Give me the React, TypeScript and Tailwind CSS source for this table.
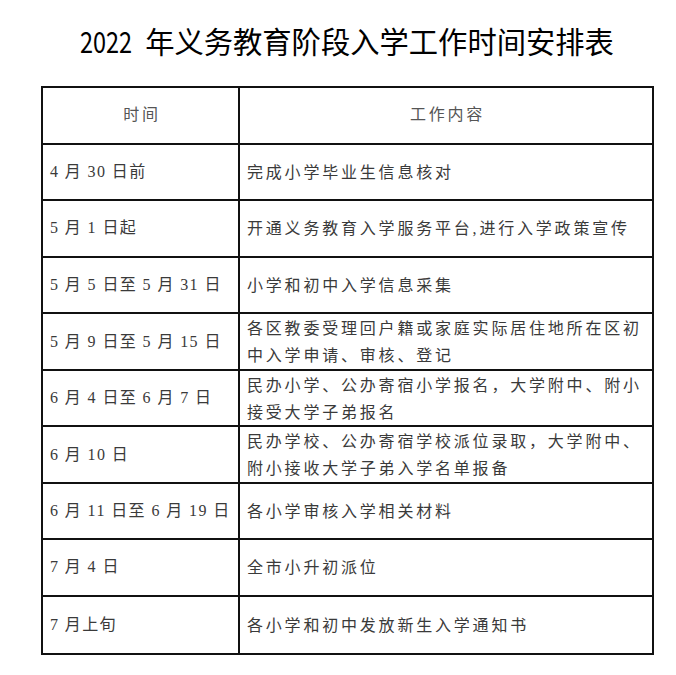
import React from "react";

const rows: { date: string; text: string[] }[] = [
  { date: "4 月 30 日前", text: ["完成小学毕业生信息核对"] },
  { date: "5 月 1 日起", text: ["开通义务教育入学服务平台,进行入学政策宣传"] },
  { date: "5 月 5 日至 5 月 31 日", text: ["小学和初中入学信息采集"] },
  {
    date: "5 月 9 日至 5 月 15 日",
    text: ["各区教委受理回户籍或家庭实际居住地所在区初", "中入学申请、审核、登记"],
  },
  {
    date: "6 月 4 日至 6 月 7 日",
    text: ["民办小学、公办寄宿小学报名，大学附中、附小", "接受大学子弟报名"],
  },
  {
    date: "6 月 10 日",
    text: ["民办学校、公办寄宿学校派位录取，大学附中、", "附小接收大学子弟入学名单报备"],
  },
  { date: "6 月 11 日至 6 月 19 日", text: ["各小学审核入学相关材料"] },
  { date: "7 月 4 日", text: ["全市小升初派位"] },
  { date: "7 月上旬", text: ["各小学和初中发放新生入学通知书"] },
];

export default function App() {
  return (
    <div className="min-h-[675px] w-[676px] bg-white text-[#3a3a3a] font-['Liberation_Serif','Noto_Sans_CJK_SC',serif]">
      <div className="flex h-[86px] items-center justify-center pb-[5px] pl-[18px]">
        <h1 className="whitespace-nowrap font-['Noto_Sans_CJK_SC',sans-serif] text-[29.3px] leading-none text-black">
          <span className="mr-[13px] inline-block w-[52px] origin-left scale-x-[0.8]">2022</span>年义务教育阶段入学工作时间安排表
        </h1>
      </div>

      <div className="ml-[41px] w-[613px] border-2 border-[#111]">
        <div className="grid h-[56.5px] grid-cols-[197px_1fr] border-b-2 border-[#111] text-[16px] tracking-[2.8px] text-[#555]">
          <div className="flex items-center justify-center border-r-2 border-[#111] pl-[3px]">时间</div>
          <div className="flex items-center justify-center pl-[3px]">工作内容</div>
        </div>

        {rows.map((row, i) => (
          <div
            key={row.date}
            className={
              "grid h-[56.5px] grid-cols-[197px_1fr] text-[16px] " +
              (i < rows.length - 1 ? "border-b-2 border-[#111]" : "")
            }
          >
            <div className="flex items-center whitespace-nowrap border-r-2 border-[#111] pl-[7px] tracking-[1.4px]">
              {row.date}
            </div>
            <div className="flex flex-col justify-center whitespace-nowrap pl-[7px] pt-[1px] leading-[27px] tracking-[2.8px]">
              {row.text.map((t) => (
                <span key={t}>{t}</span>
              ))}
            </div>
          </div>
        ))}
      </div>
    </div>
  );
}
